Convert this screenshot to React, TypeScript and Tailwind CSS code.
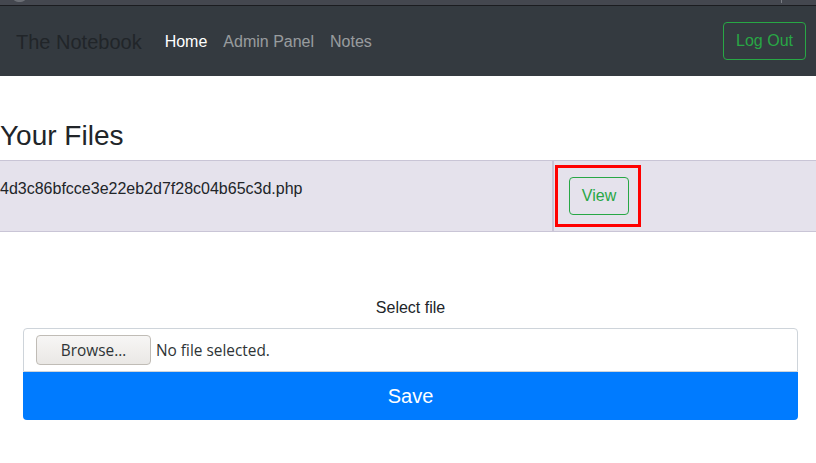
import React from "react";

export default function App() {
  return (
    <div className="w-[816px] min-h-[463px] bg-white font-['Liberation_Sans',Arial,sans-serif] text-[#212529]">
      {/* window top strip */}
      <div className="relative h-[5px] bg-[#44474f]">
        <div className="absolute left-[13px] top-[-8px] w-[13px] h-[10px] rounded-full bg-[#6b6e75]" />
        <div className="absolute left-[781px] top-0 w-px h-[3px] bg-[#7a7d84]" />
      </div>
      <div className="h-px bg-[#1b1c20]" />

      {/* navbar */}
      <nav className="h-[70px] bg-[#343a40] flex items-center pl-4 pr-[10px]">
        <span className="text-[20px] leading-[30px] text-[#212529] mr-[15px] pt-px">The Notebook</span>
        <ul className="flex text-base leading-6 pt-[2px]">
          <li className="px-2 text-white">Home</li>
          <li className="px-2 text-white/50">Admin Panel</li>
          <li className="px-2 text-white/50">Notes</li>
        </ul>
        <button className="ml-auto h-[38px] px-3 border border-[#28a745] rounded text-[#28a745] text-base leading-6">
          Log Out
        </button>
      </nav>

      {/* files */}
      <h3 className="mt-[43px] mb-[7px] text-[28px] leading-[34px] font-normal">Your Files</h3>
      <div className="flex border-t border-b border-[#c9c5d6] bg-[#e5e2ec]">
        <div className="w-[554px] border-r-2 border-[#c9c5d6] pt-4 text-base leading-6">
          4d3c86bfcce3e22eb2d7f28c04b65c3d.php
        </div>
        <div className="pl-px py-1">
          <div className="border-[3px] border-[#ff0000] pt-[9px] pb-[9px] pl-[11px] pr-[9px]">
            <button className="w-[60px] h-[38px] border border-[#28a745] rounded text-[#28a745] text-base leading-6">
              View
            </button>
          </div>
        </div>
      </div>

      {/* upload form */}
      <div className="ml-[23px] w-[775px] mt-16">
        <div className="text-center text-base leading-6 mb-2">Select file</div>
        <div className="h-[44px] border border-[#ced4da] rounded-t flex items-center px-3 font-['Open_Sans',sans-serif] text-[15.4px] text-[#2e3436]">
          <div className="w-[115px] h-[30px] border border-[#c0bcb6] rounded bg-gradient-to-b from-[#f7f6f5] to-[#eae8e5] flex items-center justify-center pt-[2px]">
            Browse…
          </div>
          <span className="ml-[5px] pt-[2px]">No file selected.</span>
        </div>
        <button className="w-full h-[48px] bg-[#007bff] text-white text-[20px] leading-[30px] rounded-b">
          Save
        </button>
      </div>
    </div>
  );
}
